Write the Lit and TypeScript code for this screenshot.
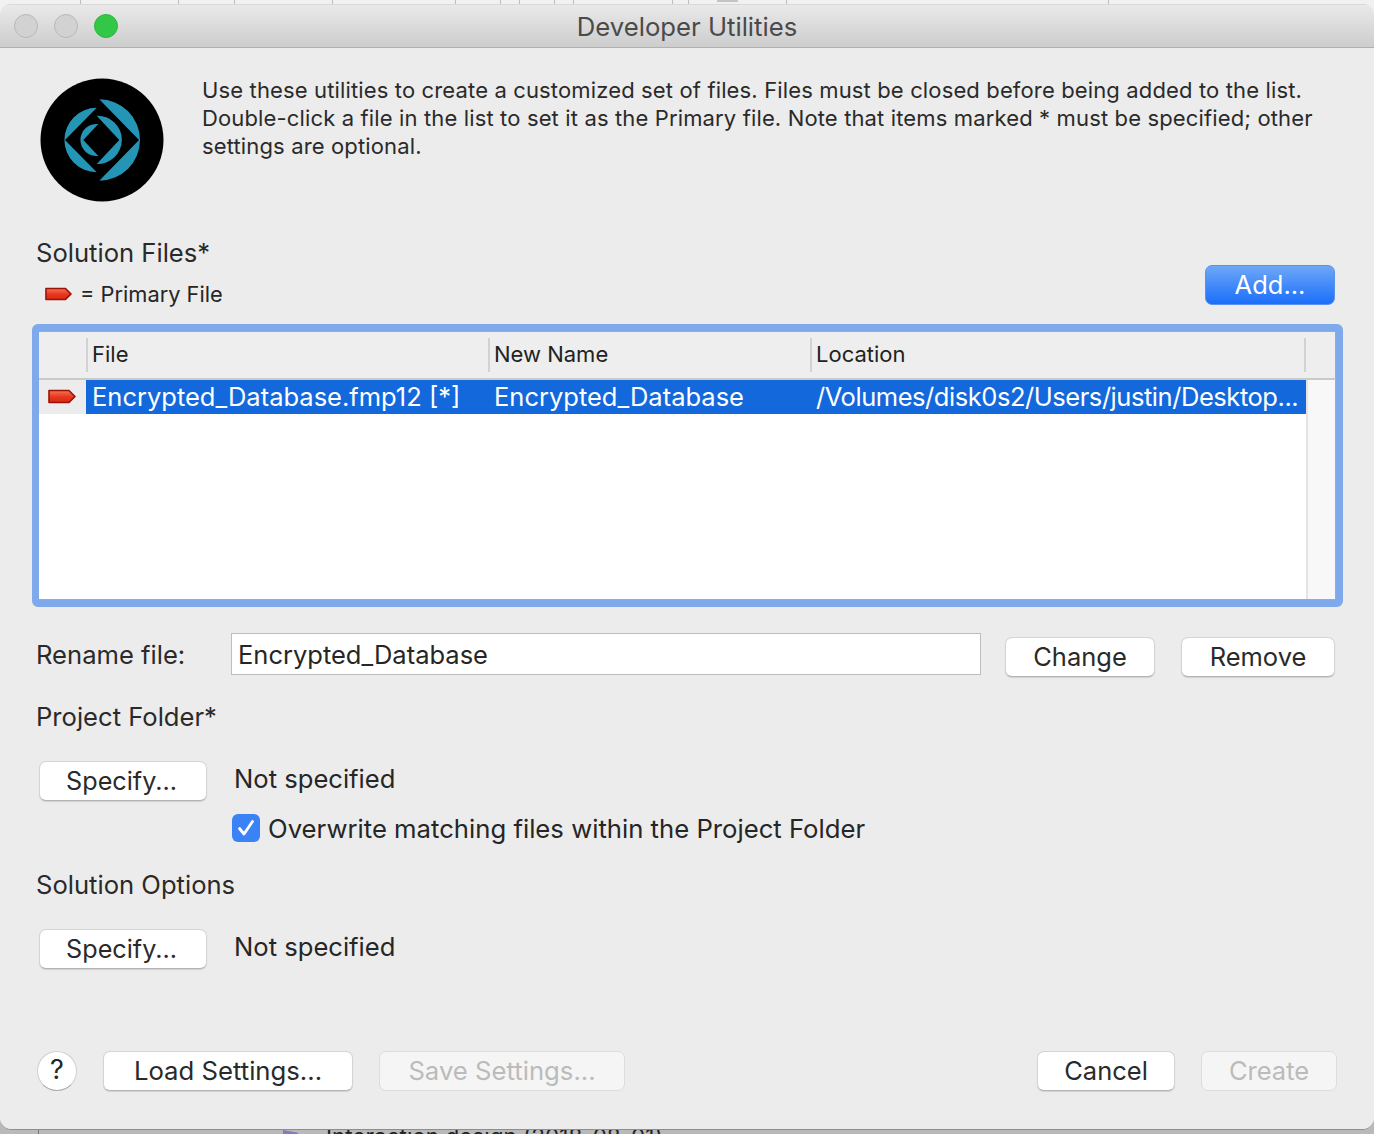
import { LitElement, html, css } from "lit";
import { customElement } from "lit/decorators.js";

const flag = (cls: string) => html`<svg class=${cls} viewBox="0 0 28 15" preserveAspectRatio="none" aria-hidden="true">
  <defs><linearGradient id="fg" x1="0" y1="0" x2="0" y2="1"><stop offset="0" stop-color="#f4764f"/><stop offset=".55" stop-color="#e8351f"/><stop offset="1" stop-color="#d52a15"/></linearGradient></defs>
  <path d="M1 1.5H21L27 7.5L21 13.5H1Z" fill="url(#fg)" stroke="#9a1208" stroke-width="1.6" stroke-linejoin="round"/>
</svg>`;

const topLines = [81, 98, 56, 98, 123, 45, 19, 35, 19, 99, 16, 98, 322];

@customElement("app-root")
export class AppRoot extends LitElement {
  static styles = css`
    :host { display: flex; flex-direction: column; width: 1374px; height: 1134px; overflow: hidden; background: linear-gradient(#f1f1f1 50%, #b9b9b9 50%); font-family: Inter, "Liberation Sans", sans-serif; color: #262626; font-size: 25.6px; }
    * { box-sizing: border-box; }
    .strip { height: 4px; flex: none; display: flex; background: #f1f1f1; }
    .strip i { flex: none; width: 1px; background: #bdbdbd; }
    .strip b { flex: none; width: 21px; height: 2px; background: #c4c4c4; position: absolute; left: 717px; top: 0; }
    .backdrop { height: 4px; flex: none; display: flex; background: #b9b9b9; overflow: hidden; padding-left: 38px; }
    .backdrop i { flex: none; width: 1px; margin-right: 226px; background: #777; }
    .backdrop em { flex: none; width: 15px; height: 4px; margin: 0 28px 0 18px; background: #7f7dbd; clip-path: polygon(0 0, 100% 70%, 100% 100%, 0 100%); }
    .backdrop span { flex: none; font-size: 22.5px; line-height: 30px; margin-top: -8px; color: #222; white-space: nowrap; }
    .window { height: 1126px; flex: none; background: #ebebeb; border-radius: 10px 10px 12px 12px; display: flex; flex-direction: column; overflow: hidden; border-bottom: 1px solid #8e8e8e; }
    .titlebar { height: 44px; flex: none; display: flex; align-items: center; justify-content: center; position: relative; border-top: 1px solid #d9d9d9; border-bottom: 1px solid #b0b0b0; background: linear-gradient(#e9e9e9, #cdcdcd); color: #4a4a4a; font-size: 25.7px; }
    .lights { position: absolute; left: 14px; top: 9px; display: flex; gap: 16px; }
    .light { width: 24px; height: 24px; border-radius: 50%; background: #d2d2d2; border: 1px solid #b8b8b8; }
    .light.green { background: #33c748; border-color: #2cb53e; }
    .body { flex: 1; display: flex; flex-direction: column; padding: 0 37px; background: #ececec; }
    .intro { display: flex; height: 176px; padding-left: 3px; }
    .logo { width: 124px; height: 124px; margin-top: 30px; flex: none; }
    .intro p { margin: 28px 0 0 38px; font-size: 22px; line-height: 28px; color: #2a2a2a; white-space: nowrap; letter-spacing: .14px; }
    .head { display: flex; justify-content: space-between; align-items: flex-end; height: 81px; }
    .head > div:first-child { align-self: flex-start; margin-top: 14px; margin-left: -1px; }
    .h { font-size: 25.6px; line-height: 30px; color: #2a2a2a; }
    .legend { display: flex; align-items: center; font-size: 21.8px; line-height: 28px; margin-top: 12px; padding-left: 9px; }
    .legend .f1 { width: 27px; height: 14px; margin-right: 8px; }
    .btn { flex: none; height: 40px; padding-bottom: 2px; background: #fff; border-radius: 7px; border: 1px solid #d4d4d4; border-bottom-color: #b4b4b4; box-shadow: 0 1px 1px rgba(0,0,0,.12); display: flex; align-items: center; justify-content: center; color: #2a2a2a; font-size: 25.5px; }
    .btn.off { background: #f5f5f5; color: #bbb; border-color: #dcdcdc; box-shadow: none; }
    .btn.primary { background: linear-gradient(#6ea7f7, #1a6ffb); border-color: #5a93ee; color: #fff; box-shadow: none; width: 130px; margin-right: 2px; }
    .table { margin: 19px -6px 0 -5px; height: 283px; border: 7px solid #7eaaec; border-radius: 6px; background: #fff; display: flex; flex-direction: column; overflow: hidden; }
    .thead { display: grid; grid-template-columns: 47px 402px 322px 494px 30px 1fr; height: 49px; flex: none; background: #eeeeee; border-top: 1px solid #a8a8a8; border-right: 1px solid #a8a8a8; border-bottom: 2px solid #c9c9c9; align-items: center; font-size: 22px; color: #222; }
    .th { height: 34px; display: flex; align-items: center; padding: 0 0 3px 4px; border-left: 2px solid #d2d2d2; }
    .th:first-child { border: 0; }
    .tbody { flex: 1; display: grid; grid-template-columns: 47px 1220px 1fr; grid-template-rows: 34px 1fr; border-bottom: 1px solid #a8a8a8; }
    .mark { background: #ececec; display: flex; align-items: center; padding: 0 0 2px 9px; }
    .mark .f2 { width: 28px; height: 15px; }
    .row { background: #1368dc; color: #fff; display: grid; grid-template-columns: 402px 322px 1fr; align-items: center; font-size: 25.5px; padding-bottom: 2px; }
    .row span { padding-left: 6px; white-space: nowrap; overflow: hidden; }
    .row .path { letter-spacing: -.45px; }
    .scroll { grid-column: 3; grid-row: 1 / 3; background: #f8f8f8; border-left: 2px solid #e4e4e4; border-right: 1px solid #a8a8a8; }
    .rename { display: flex; align-items: flex-start; margin-top: 26px; height: 44px; }
    .rename label { width: 194px; margin-left: -1px; margin-right: 1px; font-size: 25.6px; line-height: 44px; color: #2a2a2a; }
    .input { width: 750px; height: 42px; background: #fff; border: 1px solid #bdbdbd; padding-left: 6px; line-height: 41px; font-size: 25.5px; }
    .rename .btn { margin-top: 4px; }
    .change { width: 150px; margin-left: 24px; }
    .remove { width: 154px; margin-left: 26px; }
    .section { margin: 25px 0 0 -1px; }
    .section.second { margin-top: 27px; }
    .specify { display: flex; align-items: center; margin-top: 29px; padding-left: 2px; }
    .specify .btn { width: 168px; margin-right: 27px; font-size: 25.2px; padding: 0 3px 0 0; }
    .specify span { margin-bottom: 6px; }
    .check { display: flex; align-items: center; margin: 12px 0 0 195px; height: 30px; font-size: 25.7px; }
    .box { width: 28px; height: 28px; border-radius: 6px; background: #3b82f6; margin-right: 8px; display: flex; align-items: center; justify-content: center; }
    .box svg { width: 20px; height: 20px; }
    .footer { margin-top: auto; display: flex; align-items: center; height: 42px; margin-bottom: 37px; }
    .help { width: 40px; height: 40px; padding-bottom: 4px; border-radius: 50%; background: #fff; border: 1px solid #cfcfcf; border-bottom-color: #aaa; display: flex; align-items: center; justify-content: center; font-size: 27px; margin-right: 26px; flex: none; }
    .load { width: 250px; margin-right: 26px; font-size: 25.7px; }
    .save { width: 246px; font-size: 25.7px; }
    .spacer { flex: 1; }
    .cancel { width: 138px; margin-right: 26px; }
    .create { width: 136px; }
  `;

  render() {
    return html`
      <div class="strip">${topLines.map((w) => html`<span style="width:${w - 1}px"></span><i></i>`)}<b></b></div>
      <div class="window">
        <div class="titlebar">
          <div class="lights"><div class="light"></div><div class="light"></div><div class="light green"></div></div>
          Developer Utilities
        </div>
        <div class="body">
          <div class="intro">
            <svg class="logo" viewBox="40 78 124 124" aria-hidden="true">
              <circle cx="102" cy="140" r="61.5" fill="#000"/>
              <g fill="#2595b6">
                <path d="M99.3 99.3A40.7 40.7 0 1 1 99.3 180.7L139 140Z"/>
                <path d="M96.7 107.7A32.3 32.3 0 1 0 96.7 172.3L65 140Z"/>
                <path d="M96.7 115.7A24.17 24.17 0 1 1 96.7 164L119.3 140Z"/>
                <path d="M98.3 124A16.1 16.1 0 1 0 98.3 156L83.3 140Z"/>
              </g>
            </svg>
            <p>Use these utilities to create a customized set of files. Files must be closed before being added to the list.<br>Double-click a file in the list to set it as the Primary file. Note that items marked * must be specified; other<br>settings are optional.</p>
          </div>
          <div class="head">
            <div>
              <div class="h">Solution Files*</div>
              <div class="legend">${flag("f1")}= Primary File</div>
            </div>
            <div class="btn primary">Add...</div>
          </div>
          <div class="table">
            <div class="thead">
              <div class="th"></div><div class="th">File</div><div class="th">New Name</div><div class="th">Location</div><div class="th"></div>
            </div>
            <div class="tbody">
              <div class="mark">${flag("f2")}</div>
              <div class="row"><span>Encrypted_Database.fmp12 [*]</span><span>Encrypted_Database</span><span class="path">/Volumes/disk0s2/Users/justin/Desktop...</span></div>
              <div class="scroll"></div>
            </div>
          </div>
          <div class="rename">
            <label>Rename file:</label>
            <div class="input">Encrypted_Database</div>
            <div class="btn change">Change</div>
            <div class="btn remove">Remove</div>
          </div>
          <div class="section h">Project Folder*</div>
          <div class="specify"><div class="btn">Specify...</div><span>Not specified</span></div>
          <div class="check"><div class="box"><svg viewBox="0 0 20 20"><path d="M3.5 10.5L8 16L16.5 3.5" fill="none" stroke="#fff" stroke-width="2.8" stroke-linecap="round" stroke-linejoin="round"/></svg></div>Overwrite matching files within the Project Folder</div>
          <div class="section second h">Solution Options</div>
          <div class="specify"><div class="btn">Specify...</div><span>Not specified</span></div>
          <div class="footer">
            <div class="help">?</div>
            <div class="btn load">Load Settings...</div>
            <div class="btn off save">Save Settings...</div>
            <div class="spacer"></div>
            <div class="btn cancel">Cancel</div>
            <div class="btn off create">Create</div>
          </div>
        </div>
      </div>
      <div class="backdrop"><i></i><em></em><span>Interaction design (2018-08-01)</span></div>`;
  }
}
